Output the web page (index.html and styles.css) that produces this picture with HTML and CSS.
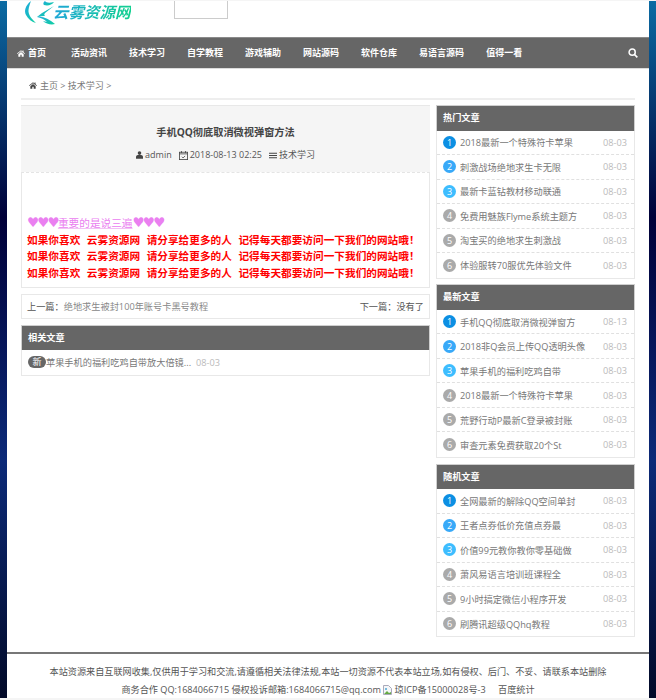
FILE: index.html
```html
<!DOCTYPE html>
<html lang="zh">
<head>
<meta charset="utf-8">
<title>手机QQ彻底取消微视弹窗方法</title>
<link rel="stylesheet" href="styles.css">
</head>
<body>
<div class="shell">
<div class="page">
  <header class="top">
    <a class="logo">
      <svg class="logo-mark" viewBox="0 0 32 24" width="32" height="24">
        <defs><linearGradient id="lg" x1="0" y1="0" x2="1" y2="1"><stop offset="0" stop-color="#1fa8e0"/><stop offset="1" stop-color="#10d0a0"/></linearGradient></defs>
        <path d="M8 0C2 5 1 10 3 14c2 4 6 7 10 8C9 18 5 14 5.500 9 6 5 7 3 8 0z" fill="url(#lg)"/>
        <path d="M22 0c1 2 5 2 9 1-2 3-6 4-10 3-1-1-1-2.500 1-4z" fill="url(#lg)"/>
        <path d="M31 5 19 12l-5 4c3-.5 6-1 8-1-1-1-1-1.500 0-3l9-7z" fill="url(#lg)"/>
        <path d="M14 16c6-1 12 2 18 7-4 1-9 0-12-3l4 1c-3-3-6-4-10-5z" fill="url(#lg)"/>
      </svg>
      <span class="logo-text">云雾资源网</span>
    </a>
    <div class="ad-box"></div>
  </header>
  <nav class="nav">
    <a class="nav-item nav-home"><svg class="ico" viewBox="0 0 12 10" width="8" height="7"><path d="M6 0 0 5l.7.8L6 1.5l5.3 4.3.7-.8L9.800 3.200V.600H8.300v1.400zM2 6v4h3V7h2v3h3V6L6 2.800z" fill="#fff"/></svg>首页</a>
    <a class="nav-item">活动资讯</a>
    <a class="nav-item">技术学习</a>
    <a class="nav-item">自学教程</a>
    <a class="nav-item">游戏辅助</a>
    <a class="nav-item">网站源码</a>
    <a class="nav-item">软件仓库</a>
    <a class="nav-item">易语言源码</a>
    <a class="nav-item">值得一看</a>
    <svg class="search" viewBox="0 0 12 12" width="10" height="10"><circle cx="5" cy="5" r="3.700" fill="none" stroke="#fff" stroke-width="1.800"/><path d="m7.800 7.800 3.400 3.400" stroke="#fff" stroke-width="2"/></svg>
  </nav>
  <div class="crumb">
    <svg class="ico" viewBox="0 0 12 10" width="8" height="7"><path d="M6 0 0 5l.7.8L6 1.500l5.300 4.300.7-.8L9.800 3.200V.600H8.300v1.400zM2 6v4h3V7h2v3h3V6L6 2.800z" fill="#444"/></svg><span>主页 &gt; 技术学习 &gt;</span>
  </div>
  <div class="columns">
    <main class="main">
      <article class="article">
        <div class="article-head">
          <h1 class="article-title">手机QQ彻底取消微视弹窗方法</h1>
          <div class="meta">
            <span class="meta-item"><svg viewBox="0 0 10 11" width="7" height="8"><circle cx="5" cy="2.800" r="2.600" fill="#444"/><path d="M0 11V8c0-2 2-3 5-3s5 1 5 3v3z" fill="#444"/></svg>admin</span>
            <span class="meta-item"><svg viewBox="0 0 11 11" width="9" height="9"><rect x=".5" y="1.500" width="10" height="9" fill="none" stroke="#444"/><path d="M.5 3.500h10M3 0v2.500M8 0v2.500" stroke="#444" fill="none"/><path d="m3.500 7 1.500 1.500 2.500-2.500" stroke="#444" fill="none"/></svg>2018-08-13 02:25</span>
            <span class="meta-item"><svg viewBox="0 0 10 8" width="8" height="7"><path d="M0 .5h10v1.400H0zM0 3.300h10v1.400H0zM0 6.100h10v1.400H0z" fill="#444"/></svg>技术学习</span>
          </div>
        </div>
        <div class="article-body">
          <p class="pink"><span class="heart">♥♥♥</span><u>重要的是说三遍</u><span class="heart">♥♥♥</span></p>
          <p class="red">如果你喜欢&nbsp;&nbsp;云雾资源网&nbsp;&nbsp;请分享给更多的人&nbsp;&nbsp;记得每天都要访问一下我们的网站哦！</p>
          <p class="red">如果你喜欢&nbsp;&nbsp;云雾资源网&nbsp;&nbsp;请分享给更多的人&nbsp;&nbsp;记得每天都要访问一下我们的网站哦！</p>
          <p class="red">如果你喜欢&nbsp;&nbsp;云雾资源网&nbsp;&nbsp;请分享给更多的人&nbsp;&nbsp;记得每天都要访问一下我们的网站哦！</p>
        </div>
      </article>
      <div class="pager">
        <span><b>上一篇：</b>绝地求生被封100年账号卡黑号教程</span>
        <span><b>下一篇：</b><b>没有了</b></span>
      </div>
      <section class="related">
        <h3 class="panel-title">相关文章</h3>
        <div class="related-row"><span class="pill">新</span><span class="related-text">苹果手机的福利吃鸡自带放大倍镜...</span><span class="date">08-03</span></div>
      </section>
    </main>
    <aside class="side">
      <section class="panel">
        <h3 class="panel-title">热门文章</h3>
        <ul class="rank">
          <li><i class="num n1">1</i><span class="rank-text">2018最新一个特殊符卡苹果</span><span class="date">08-03</span></li>
          <li><i class="num n2">2</i><span class="rank-text">刺激战场绝地求生卡无限</span><span class="date">08-03</span></li>
          <li><i class="num n3">3</i><span class="rank-text">最新卡蓝钻教材移动联通</span><span class="date">08-03</span></li>
          <li><i class="num">4</i><span class="rank-text">免费用魅族Flyme系统主题方</span><span class="date">08-03</span></li>
          <li><i class="num">5</i><span class="rank-text">淘宝买的绝地求生刺激战</span><span class="date">08-03</span></li>
          <li><i class="num">6</i><span class="rank-text">体验服转70服优先体验文件</span><span class="date">08-03</span></li>
        </ul>
      </section>
      <section class="panel">
        <h3 class="panel-title">最新文章</h3>
        <ul class="rank">
          <li><i class="num n1">1</i><span class="rank-text">手机QQ彻底取消微视弹窗方</span><span class="date">08-13</span></li>
          <li><i class="num n2">2</i><span class="rank-text">2018非Q会员上传QQ透明头像</span><span class="date">08-03</span></li>
          <li><i class="num n3">3</i><span class="rank-text">苹果手机的福利吃鸡自带</span><span class="date">08-03</span></li>
          <li><i class="num">4</i><span class="rank-text">2018最新一个特殊符卡苹果</span><span class="date">08-03</span></li>
          <li><i class="num">5</i><span class="rank-text">荒野行动P最新C登录被封账</span><span class="date">08-03</span></li>
          <li><i class="num">6</i><span class="rank-text">审查元素免费获取20个St</span><span class="date">08-03</span></li>
        </ul>
      </section>
      <section class="panel">
        <h3 class="panel-title">随机文章</h3>
        <ul class="rank">
          <li><i class="num n1">1</i><span class="rank-text">全网最新的解除QQ空间单封</span><span class="date">08-03</span></li>
          <li><i class="num n2">2</i><span class="rank-text">王者点券低价充值点券最</span><span class="date">08-03</span></li>
          <li><i class="num n3">3</i><span class="rank-text">价值99元教你教你零基础做</span><span class="date">08-03</span></li>
          <li><i class="num">4</i><span class="rank-text">萧风易语言培训班课程全</span><span class="date">08-03</span></li>
          <li><i class="num">5</i><span class="rank-text">9小时搞定微信小程序开发</span><span class="date">08-03</span></li>
          <li><i class="num">6</i><span class="rank-text">刷腾讯超级QQhq教程</span><span class="date">08-03</span></li>
        </ul>
      </section>
    </aside>
  </div>
  <footer class="footer">
    <p>本站资源来自互联网收集,仅供用于学习和交流,请遵循相关法律法规,本站一切资源不代表本站立场,如有侵权、后门、不妥、请联系本站删除</p>
    <p>商务合作 QQ:1684066715 侵权投诉邮箱:1684066715@qq.com <svg class="broken" viewBox="0 0 9 10" width="9" height="10"><path d="M.5.500h5l3 3v6h-8z" fill="#f4f6f8" stroke="#aab"/><path d="M1 9l3-3 2 2 2-1v2z" fill="#6a4"/><path d="M2 3h2v2H2z" fill="#7bd"/></svg> 琼ICP备15000028号-3 <span class="stat">百度统计</span></p>
  </footer>
</div>
</div>
</body>
</html>
```
FILE: styles.css
```css
* { box-sizing: border-box; }
html, body { margin: 0; padding: 0; }
body {
  background: #f5f5f5;
  font-family: "Open Sans", "Noto Sans CJK SC", sans-serif;
  color: #666;
  font-size: 9px;
}
.shell {
  margin-top: 1px;
  height: 697px;
  padding: 0 7px;
  overflow: hidden;
  background: linear-gradient(180deg, #0b6ba3 0, #000038 31%, #0c2a78 66%, #020a28 100%);
}
.page { background: #fff; height: 697px; }

.top { height: 36px; display: flex; overflow: hidden; }
.logo { display: flex; width: 167px; height: 24px; padding-left: 16px; }
.logo-mark { flex: none; }
.logo-text {
  margin: 1px 0 0 -2px;
  font-family: "Noto Sans CJK SC", sans-serif;
  font-size: 15.500px;
  line-height: 19px;
  height: 19px;
  font-weight: 700;
  font-style: italic;
  white-space: nowrap;
  color: transparent;
  background: linear-gradient(90deg, #1fa6d8, #12d090);
  -webkit-background-clip: text;
  background-clip: text;
}
.ad-box { width: 54px; height: 18px; border: 1px solid #ccc; border-top: 0; }

.nav {
  height: 32px;
  background: #666;
  border-top: 1px solid #8a8a8a;
  border-bottom: 1px solid #dcdcdc;
  display: flex;
  align-items: center;
  gap: 22px;
  padding: 0 11px 0 10px;
}
.nav-item {
  color: #fff;
  font-size: 9px;
  font-weight: 700;
  line-height: 14px;
  display: flex;
  align-items: center;
  gap: 3px;
  white-space: nowrap;
}
.nav-home { margin-right: 3px; }
.search { margin-left: auto; }

.crumb {
  margin: 0 14px;
  height: 31px;
  padding: 10px 0 0 8px;
  border-bottom: 2px solid #eee;
  color: #777;
  line-height: 14px;
  font-size: 9px;
  display: flex;
  align-items: flex-start;
  gap: 3px;
}
.crumb .ico { margin-top: 3px; }

.columns { display: flex; gap: 6px; margin: 5px 14px 0; height: 547px; }
.main { width: 409px; display: flex; flex-direction: column; gap: 6px; }
.side { width: 199px; display: flex; flex-direction: column; gap: 5.750px; }

.article-head {
  height: 67px;
  background: #f5f5f5;
  border-top: 1px solid #e8e8e8;
  padding-top: 18px;
  text-align: center;
}
.article-title {
  margin: 0;
  font-size: 10.200px;
  line-height: 16px;
  font-weight: 700;
  color: #444;
}
.meta {
  margin-top: 8px;
  display: flex;
  justify-content: center;
  gap: 7px;
  line-height: 14px;
  font-size: 9px;
  color: #555;
}
.meta-item { display: flex; align-items: center; gap: 2px; }
.article-body {
  height: 116px;
  border: 1px solid #e8e8e8;
  border-top: 1px dashed #e4e4e4;
  padding: 41px 0 0 5px;
}
.article-body p {
  margin: 0;
  line-height: 16.500px;
  font-size: 10.660px;
  white-space: nowrap;
  font-family: "Noto Sans CJK SC", sans-serif;
  word-spacing: .85px;
}
.pink { color: #ea80f0; }
.pink u { text-decoration-color: #f3c0f6; }
.heart { font-family: "DejaVu Sans", sans-serif; font-size: 13.500px; letter-spacing: -1.800px; }
.red { color: #f00; font-weight: 700; }

.pager {
  height: 24.500px;
  border: 1px solid #e8e8e8;
  display: flex;
  justify-content: space-between;
  align-items: center;
  padding: 0 5px;
  color: #888;
  font-size: 9.200px;
}
.pager b { font-weight: 400; color: #555; }

.panel-title {
  margin: 0;
  height: 25.500px;
  background: #666;
  border: 1px solid #cfcfcf;
  border-bottom: 0;
  padding-left: 6px;
  line-height: 24px;
  color: #fff;
  font-size: 9.200px;
  font-weight: 700;
}
.related { border-bottom: 1px solid #e8e8e8; }
.related-row {
  height: 24.500px;
  border: 1px solid #e8e8e8;
  border-width: 0 1px;
  display: flex;
  align-items: center;
  padding-left: 6px;
  font-size: 9.200px;
  color: #777;
}
.pill {
  width: 18px;
  height: 12px;
  background: #666;
  color: #fff;
  border-radius: 6px;
  text-align: center;
  line-height: 12px;
  font-size: 9px;
  flex: none;
}
.related-text { margin-right: 5px; }
.date { color: #bbb; font-size: 9.200px; }

.panel { border-bottom: 1px solid #e8e8e8; }
.rank { list-style: none; margin: 0; padding: 0; border: 1px solid #e8e8e8; border-width: 0 1px; }
.rank li {
  height: 24.500px;
  display: flex;
  align-items: center;
  padding: 0 7px 0 6px;
  border-bottom: 1px dashed #e0e0e0;
}
.rank li:last-child { border-bottom: 0; }
.num {
  width: 13px;
  height: 13px;
  border-radius: 50%;
  background: #aaa;
  color: #fff;
  font-style: normal;
  font-size: 9px;
  line-height: 13px;
  text-align: center;
  flex: none;
}
.n1 { background: #0c8fe3; }
.n2 { background: #38a9f8; }
.n3 { background: #3dbdff; }
.rank-text {
  margin-left: 4px;
  flex: 1;
  font-size: 9.200px;
  color: #777;
  white-space: nowrap;
  overflow: hidden;
}

.footer {
  border-top: 2px solid #777;
  height: 45px;
  padding-top: 9px;
  text-align: center;
  color: #555;
  font-size: 9.150px;
}
.footer p { margin: 0; line-height: 17.500px; white-space: nowrap; }
.broken { vertical-align: -2px; }
.stat { margin-left: 10px; }
```
